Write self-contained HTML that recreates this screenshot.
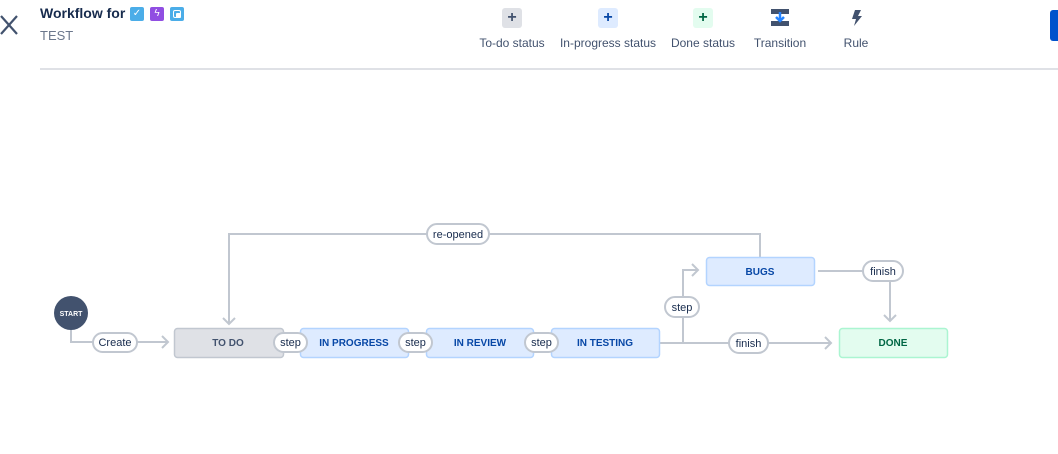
<!DOCTYPE html>
<html><head><meta charset="utf-8"><style>
body{margin:0;width:1058px;height:454px;overflow:hidden;background:#fff;font-family:"Liberation Sans",Arial,sans-serif;position:relative}
.a{position:absolute}
.tl{font-size:12px;color:#42526e;text-align:center;width:110px;top:36px}
.ic{width:20px;height:20px;border-radius:3px;top:8px;font-weight:bold;font-size:16px;line-height:20px;text-align:center}
</style></head><body>
<svg class="a" style="left:0;top:14px" width="20" height="22"><path d="M1 2 L17 20 M17 2 L1 20" stroke="#42526e" stroke-width="2.2"/></svg>
<div class="a" style="left:40px;top:5px;font-size:14px;font-weight:bold;color:#172b4d">Workflow for</div>
<div class="a" style="left:130px;top:7px;width:14px;height:14px;background:#4bade8;border-radius:2px;color:#fff;font-size:10px;line-height:14px;text-align:center">✓</div>
<div class="a" style="left:150px;top:7px;width:14px;height:14px;background:#904ee2;border-radius:2px;color:#fff;font-size:10px;line-height:14px;text-align:center">ϟ</div>
<div class="a" style="left:170px;top:7px;width:14px;height:14px;background:#4bade8;border-radius:2px"><div class="a" style="left:3px;top:3px;width:6px;height:6px;border:1px solid #fff;border-radius:2px"></div><div class="a" style="left:6px;top:6px;width:5px;height:5px;background:#fff;border-radius:1px"></div></div>
<div class="a" style="left:40px;top:28px;font-size:13px;color:#6b778c">TEST</div>
<div class="a" style="left:40px;top:68px;width:1018px;height:2px;background:#dfe1e6"></div>
<div class="a" style="left:1050px;top:10px;width:12px;height:31px;background:#0052cc;border-radius:3px"></div>

<div class="a ic" style="left:502px;background:#dfe1e6;color:#42526e">+</div>
<div class="a tl" style="left:457px">To-do status</div>
<div class="a ic" style="left:598px;background:#deebff;color:#0747a6">+</div>
<div class="a tl" style="left:553px">In-progress status</div>
<div class="a ic" style="left:693px;background:#e3fcef;color:#006644">+</div>
<div class="a tl" style="left:648px">Done status</div>
<svg class="a" style="left:770px;top:8px" width="20" height="20"><rect x="1" y="1" width="18" height="5" fill="#42526e"/><rect x="1" y="13" width="18" height="5" fill="#42526e"/><path d="M10 4 V13 M6 9 L10 13 L14 9" stroke="#2684ff" stroke-width="2.5" fill="none"/></svg>
<div class="a tl" style="left:725px">Transition</div>
<svg class="a" style="left:846px;top:8px" width="20" height="20"><path d="M9 2 L15 2 L12 8 L16 8 L8 18 L10 11 L6 11 Z" fill="#42526e"/></svg>
<div class="a tl" style="left:801px">Rule</div>

<svg class="a" style="left:0;top:0" width="1058" height="454" font-family="Liberation Sans,Arial,sans-serif">
<g stroke="#c1c7d0" stroke-width="2" fill="none">
<path d="M71 330 V342 H168"/><path d="M162 336 L168 342 L162 348"/>
<path d="M760 257 V234 H229 V324"/><path d="M223 318 L229 324 L235 318"/>
<path d="M659 343 H831"/><path d="M825 337 L831 343 L825 349"/>
<path d="M683 343 V270 H698"/><path d="M692 264 L698 270 L692 276"/>
<path d="M818 271 H890 V321"/><path d="M884 315 L890 321 L896 315"/>
</g>
<circle cx="71" cy="313" r="17" fill="#42526e"/>
<text x="71" y="316" font-size="7" font-weight="bold" fill="#fff" text-anchor="middle">START</text>
<g font-size="10" font-weight="bold" text-anchor="middle">
<rect x="174.5" y="328.5" width="109" height="29" rx="3" fill="#dfe1e6" stroke="#c1c7d0" stroke-width="1.5"/><text x="228" y="346" fill="#42526e">TO DO</text>
<rect x="300.5" y="328.5" width="108" height="29" rx="3" fill="#deebff" stroke="#b3d4ff" stroke-width="1.5"/><text x="354" y="346" fill="#0747a6">IN PROGRESS</text>
<rect x="426.5" y="328.5" width="107" height="29" rx="3" fill="#deebff" stroke="#b3d4ff" stroke-width="1.5"/><text x="480" y="346" fill="#0747a6">IN REVIEW</text>
<rect x="551.5" y="328.5" width="108" height="29" rx="3" fill="#deebff" stroke="#b3d4ff" stroke-width="1.5"/><text x="605" y="346" fill="#0747a6">IN TESTING</text>
<rect x="706.5" y="257.5" width="108" height="28" rx="3" fill="#deebff" stroke="#b3d4ff" stroke-width="1.5"/><text x="760" y="275" fill="#0747a6">BUGS</text>
<rect x="839.5" y="328.5" width="108" height="29" rx="3" fill="#e3fcef" stroke="#abf5d1" stroke-width="1.5"/><text x="893" y="346" fill="#006644">DONE</text>
</g>
<g font-size="11" text-anchor="middle" fill="#172b4d">
<g stroke="#c1c7d0" stroke-width="2" fill="#fff">
<rect x="93" y="333" width="44" height="19" rx="9.5"/>
<rect x="274" y="333" width="33" height="19" rx="9.5"/>
<rect x="399" y="333" width="33" height="19" rx="9.5"/>
<rect x="525" y="333" width="33" height="19" rx="9.5"/>
<rect x="427" y="224" width="62" height="20" rx="10"/>
<rect x="665" y="297" width="34" height="20" rx="10"/>
<rect x="729" y="333" width="39" height="20" rx="10"/>
<rect x="863" y="261" width="40" height="20" rx="10"/>
</g>
<text x="115" y="346">Create</text>
<text x="290.5" y="346">step</text>
<text x="415.5" y="346">step</text>
<text x="541.5" y="346">step</text>
<text x="458" y="238">re-opened</text>
<text x="682" y="311">step</text>
<text x="748.5" y="347">finish</text>
<text x="883" y="275">finish</text>
</g>
</svg>
</body></html>
